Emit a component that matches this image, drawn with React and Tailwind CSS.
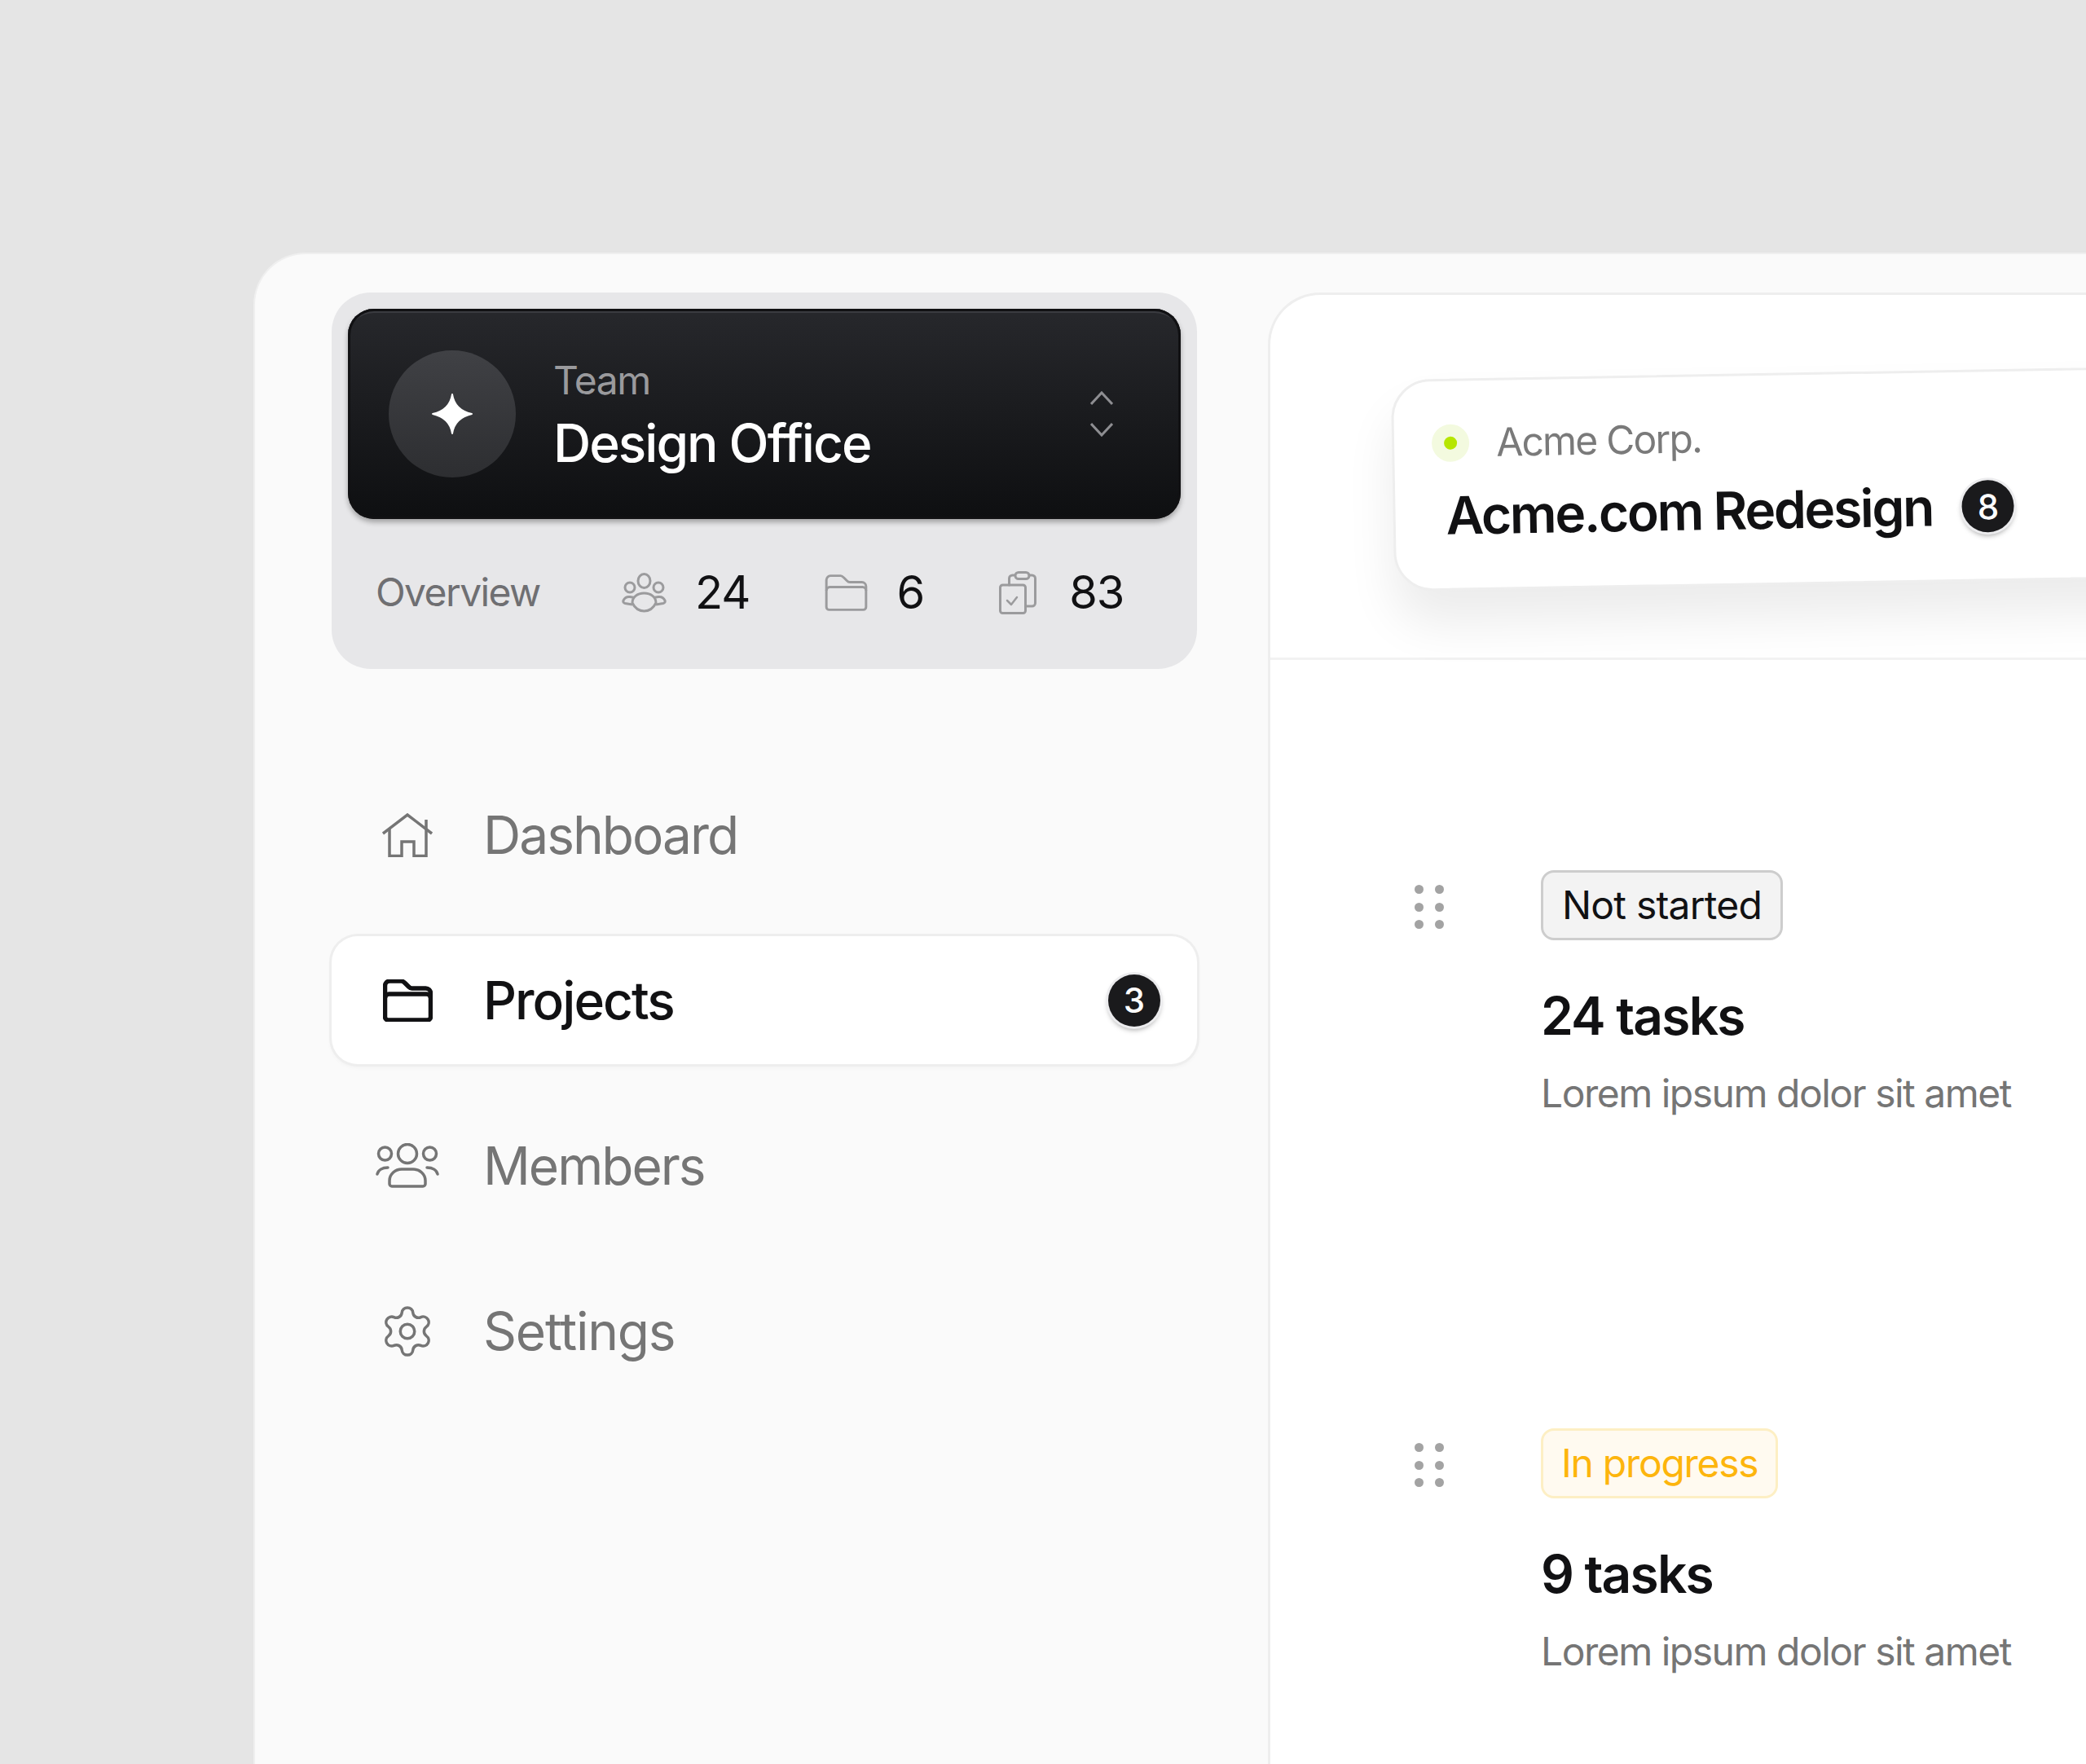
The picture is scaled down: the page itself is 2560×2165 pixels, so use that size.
import React from 'react';
import { Settings } from 'lucide-react';

const StarIcon = () => (
  <svg width="52" height="52" viewBox="0 0 50 50" fill="#fff" stroke="#fff" strokeWidth="2" strokeLinejoin="round">
    <path d="M25 2 C27 15 35 22 48 25 C35 28 27 35 25 48 C23 35 15 28 2 25 C15 22 23 15 25 2Z" />
  </svg>
);

const ChevronsIcon = () => (
  <svg width="28" height="56" viewBox="0 0 28 56" fill="none" stroke="#8e8e92" strokeWidth="3">
    <path d="M1 16 L14 2 L27 16" />
    <path d="M1 40 L14 54 L27 40" />
  </svg>
);

const HouseIcon = () => (
  <svg width="62" height="54" viewBox="0 0 62 54" fill="none" stroke="currentColor" strokeWidth="3.5" strokeLinejoin="miter">
    <path d="M1 25 L31 2 L61 25" />
    <path d="M9 19 V52.5 H24 V35 H39 V52.5 H54 V8" />
  </svg>
);

const FolderIcon = ({ w, h, sw, color }) => (
  <svg width={w} height={h} viewBox="0 0 61 52" fill="none" stroke={color} strokeWidth={sw} strokeLinejoin="round">
    <path d="M2.500 46 V8 a6 6 0 0 1 6-6 h14 c2 0 3 1 5 3 l4 4 c1 1 2 2 4 2 h17 a6 6 0 0 1 6 6 v29 a4 4 0 0 1 -4 4 H6.500 a4 4 0 0 1 -4-4Z" />
    <path d="M2.500 23 a5 5 0 0 1 5-5 h46 a5 5 0 0 1 5 5" />
  </svg>
);

const MembersIcon = () => (
  <svg width="78" height="55" viewBox="0 0 78 55" fill="none" stroke="currentColor" strokeWidth="3.5" strokeLinecap="round">
    <circle cx="39" cy="13" r="11.5" />
    <circle cx="11.5" cy="13" r="8" />
    <circle cx="66.5" cy="13" r="8" />
    <path d="M17 46 c0-8 7-14 15-14 h14 c8 0 15 6 15 14 v4 a3 3 0 0 1 -3 3 H20 a3 3 0 0 1 -3-3z" />
    <path d="M2 38 c1-5 6-8 13-8" />
    <path d="M76 38 c-1-5-6-8-13-8" />
  </svg>
);

const TeamIcon = () => (
  <svg width="55" height="49" viewBox="0 0 55 49" fill="none" stroke="#9b9b9d" strokeWidth="3">
    <ellipse cx="27.5" cy="10" rx="7.5" ry="8.5" />
    <circle cx="10" cy="18" r="6" />
    <circle cx="45" cy="18" r="6" />
    <path d="M13 37 c0-7 6-12 14.500-12 s14.500 5 14.500 12 c-3 6-8 10-14.500 10 s-11.500-4-14.500-10z" />
    <path d="M13 39 L4 37.500 c-2-.500-2.500-2-2-3.500 c1.500-3 4.500-5 8-4.500 l6 1" />
    <path d="M42 39 L51 37.500 c2-.500 2.500-2 2-3.500 c-1.500-3-4.500-5-8-4.500 l-6 1" />
  </svg>
);

const ClipboardIcon = () => (
  <svg className="mr-[5px]" width="46" height="53" viewBox="0 0 46 53" fill="none" stroke="#9b9b9d" strokeWidth="3" strokeLinejoin="round" strokeLinecap="round">
    <rect x="1.500" y="17" width="31" height="34.500" rx="3" />
    <path d="M12.500 17 V9 a4 4 0 0 1 4-4 h3" />
    <path d="M37 5 h3.500 a4 4 0 0 1 4 4 v30 a4 4 0 0 1 -4 4 h-8" />
    <rect x="20" y="1.500" width="17" height="8" rx="4" />
    <path d="M10 36 l5 5 l7-9" strokeWidth="2.500" />
  </svg>
);

const CountBadge = ({ children }) => (
  <div className="flex h-[64px] w-[64px] shrink-0 items-center justify-center rounded-full bg-[#1a1a1c] text-[42px] font-medium text-white shadow-[0_0_0_3px_#ececee,0_4px_6px_rgba(0,0,0,0.35)]">
    {children}
  </div>
);

const Stat = ({ icon, value }) => (
  <div className="flex items-center gap-[35px]">
    {icon}
    <span className="text-[56px] leading-none tracking-[-1px] text-[#111113]">{value}</span>
  </div>
);

const navItems = [
  { label: 'Dashboard', tracking: 'tracking-[-2px]', icon: <HouseIcon /> },
  { label: 'Projects', tracking: 'tracking-[-2px]', icon: <FolderIcon w={61} h={52} sw={5.5} color="#111113" />, active: true, count: 3 },
  { label: 'Members', tracking: 'tracking-[-2px]', icon: <MembersIcon /> },
  { label: 'Settings', tracking: 'tracking-[-1.2px]', icon: <Settings size={70} strokeWidth={1.2} /> },
];

const tasks = [
  { status: 'Not started', count: '24 tasks', badge: 'border-[#cdcdcd] bg-[#f3f3f3] px-[23px] tracking-[-0.8px] text-[#111113]' },
  { status: 'In progress', count: '9 tasks', badge: 'border-[#fdefc4] bg-[#fffaf0] px-[22px] tracking-[-1.3px] text-[#fdb50d]' },
];

const App = () => {
  return (
    <div className="h-[2165px] overflow-hidden bg-[#e5e5e5] pl-[311px] pt-[310px] font-[Inter,sans-serif]">
      <div className="flex h-full w-[2400px] rounded-tl-[64px] border-l-2 border-t-2 border-[#efefef] bg-[#fafafa]">
        {/* Sidebar */}
        <div className="w-[1243px] shrink-0 pl-[94px] pt-[47px]">
          <div className="h-[462px] w-[1062px] rounded-[48px] bg-[#e7e7e9] p-[20px]">
            <div className="flex h-[258px] items-center rounded-[32px] bg-gradient-to-b from-[#27282c] to-[#0e0f11] pl-[50px] pr-[83px] shadow-[inset_0_0_0_3px_#111113,inset_0_6px_0_-1px_#3a3b40,0_4px_6px_rgba(0,0,0,0.3)]">
              <div className="flex h-[156px] w-[156px] items-center justify-center rounded-full bg-gradient-to-b from-[#404145] to-[#2d2e31]">
                <StarIcon />
              </div>
              <div className="ml-[46px] flex-1 pt-[5px]">
                <div className="text-[48px] leading-[56px] tracking-[-1.5px] text-[#9a9a9d]">Team</div>
                <div className="mt-[11px] text-[64px] font-medium leading-[76px] tracking-[-2px] text-white">Design Office</div>
              </div>
              <ChevronsIcon />
            </div>
            <div className="mt-[40px] flex h-[100px] items-center pl-[34px]">
              <span className="w-[302px] text-[48px] tracking-[-1.6px] text-[#6f6f72]">Overview</span>
              <div className="flex items-center gap-[92px]">
                <Stat icon={<TeamIcon />} value="24" />
                <Stat icon={<FolderIcon w={53} h={47} sw={3.4} color="#9b9b9d" />} value="6" />
                <Stat icon={<ClipboardIcon />} value="83" />
              </div>
            </div>
          </div>

          <nav className="mt-[125px] flex w-[1062px] flex-col gap-[46px]">
            {navItems.map((item) => (
              <div
                key={item.label}
                className={
                  item.active
                    ? 'flex h-[157px] items-center rounded-[32px] bg-white pl-[54px] pr-[45px] text-[#111113] shadow-[0_0_0_3px_#eeeeee,0_3px_6px_rgba(0,0,0,0.06)]'
                    : 'flex h-[157px] items-center rounded-[32px] pl-[54px] pr-[45px] text-[#757575]'
                }
              >
                <div className="flex w-[78px] items-center justify-center">{item.icon}</div>
                <span className={`ml-[54px] flex-1 text-[64px] ${item.tracking} ${item.active ? 'font-medium' : ''}`}>
                  {item.label}
                </span>
                {item.count && <CountBadge>{item.count}</CountBadge>}
              </div>
            ))}
          </nav>
        </div>

        {/* Main panel */}
        <div className="mt-[47px] flex-1 rounded-tl-[64px] border-l-[3px] border-t-[3px] border-[#eeeeee] bg-white">
          <div className="h-[448px] border-b-[3px] border-[#f2f2f2] pl-[150px] pt-[104px]">
            <div className="h-[260px] w-[1100px] origin-left -rotate-1 rounded-[48px] border-[3px] border-[#eeeeee] bg-white pl-[46px] pt-[51px] shadow-[0_40px_60px_rgba(0,0,0,0.08)]">
              <div className="flex items-center gap-[33px]">
                <div className="flex h-[46px] w-[46px] items-center justify-center rounded-full bg-[#f3fadf]">
                  <div className="h-[16px] w-[16px] rounded-full bg-[#b6e600]" />
                </div>
                <span className="text-[48px] leading-[50px] tracking-[-1.8px] text-[#7a7a7a]">Acme Corp.</span>
              </div>
              <div className="ml-[16px] mt-[22px] flex items-center gap-[36px]">
                <span className="text-[64px] font-semibold leading-[84px] tracking-[-2.3px] text-[#111113]">Acme.com Redesign</span>
                <CountBadge>8</CountBadge>
              </div>
            </div>
          </div>

          <div className="flex flex-col gap-[381px] pl-[177px] pt-[258px]">
            {tasks.map((task) => (
              <div key={task.status} className="flex gap-[119px]">
                <div className="mt-[18px] grid h-fit w-[36px] grid-cols-2 gap-x-[14px] gap-y-[10.5px]">
                  {[0, 1, 2, 3, 4, 5].map((i) => (
                    <div key={i} className="h-[11px] w-[11px] rounded-full bg-[#a3a3a3]" />
                  ))}
                </div>
                <div>
                  <div className={`flex h-[86px] w-fit items-center rounded-[16px] border-[3px] text-[48px] ${task.badge}`}>
                    {task.status}
                  </div>
                  <div className="mt-[53px] text-[64px] font-semibold leading-[80px] tracking-[-1.8px] text-[#111113]">{task.count}</div>
                  <div className="mt-[25px] text-[48px] leading-[60px] tracking-[-1.5px] text-[#757575]">Lorem ipsum dolor sit amet</div>
                </div>
              </div>
            ))}
          </div>
        </div>
      </div>
    </div>
  );
};

export default App;
